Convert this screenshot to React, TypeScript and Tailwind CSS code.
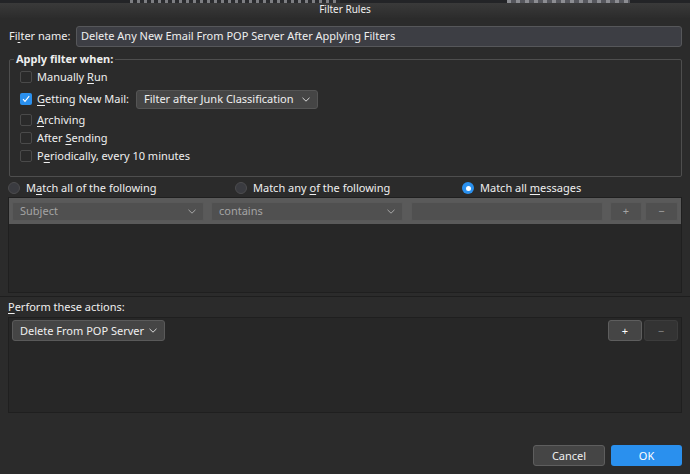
import React from "react";

const Chevron = ({ c = "#d8d8d8" }: { c?: string }) => (
  <svg width="8" height="5" viewBox="0 0 8 5" fill="none" className="shrink-0">
    <path d="M0.5 0.8L4 4.2L7.5 0.8" stroke={c} strokeWidth="1" />
  </svg>
);

const U = ({ children }: { children: React.ReactNode }) => (
  <span className="underline underline-offset-2 decoration-1">{children}</span>
);

const Check = ({ label, on }: { label: React.ReactNode; on?: boolean }) => (
  <div className="flex items-center gap-[5px] whitespace-nowrap">
    {on ? (
      <div className="w-[12px] h-[12px] rounded-[2px] bg-[#2a90ee] flex items-center justify-center">
        <svg width="10" height="10" viewBox="0 0 10 10" fill="none">
          <path d="M2 5.2l2 2.2L8.2 2.2" stroke="#fff" strokeWidth="1.1" />
        </svg>
      </div>
    ) : (
      <div className="w-[12px] h-[12px] rounded-[2px] bg-[#2a2a2a] border border-[#4a4a4a]" />
    )}
    <span>{label}</span>
  </div>
);

const Radio = ({ label, on, w }: { label: React.ReactNode; on?: boolean; w: string }) => (
  <div className={`flex items-center gap-[6px] whitespace-nowrap ${w}`}>
    {on ? (
      <div className="w-[12px] h-[12px] rounded-full bg-[#2a90ee] flex items-center justify-center">
        <div className="w-[5px] h-[5px] rounded-full bg-white" />
      </div>
    ) : (
      <div className="w-[12px] h-[12px] rounded-full bg-[#3a3b40] border border-[#4c4c4e]" />
    )}
    <span>{label}</span>
  </div>
);

export default function App() {
  return (
    <div
      className="w-[690px] h-[474px] overflow-hidden bg-[#2b2b2b] text-[#efefef] text-[11px] leading-[16px] flex flex-col whitespace-nowrap"
      style={{ fontFamily: '"Noto Sans", "Open Sans", sans-serif' }}
    >
      <div className="h-[3px] bg-[#232427] flex shrink-0">
        <div className="w-[130px]" />
        <div className="w-[210px] bg-[repeating-linear-gradient(90deg,#7d7e82_0_3px,#2a2b2e_3px_7px)]" />
        <div className="w-[167px]" />
        <div className="w-[123px] bg-[repeating-linear-gradient(90deg,#8c8d92_0_4px,#55565c_4px_9px)]" />
      </div>
      <div className="h-[15px] shrink-0 bg-gradient-to-b from-[#3a3a3a] to-[#2c2c2c] text-center text-[10px] leading-[13px] text-[#efefef]">
        Filter Rules
      </div>

      <div className="flex items-center h-[22px] mt-[7px] pl-[9px] pr-[8px] shrink-0">
        <span className="w-[67px] shrink-0">
          Fi<U>l</U>ter name:
        </span>
        <div className="flex-1 h-[21px] bg-[#3d3e44] border border-[#56575a] rounded-[3px] pl-[4px] flex items-center">
          Delete Any New Email From POP Server After Applying Filters
        </div>
      </div>

      <div className="relative mt-[12px] ml-[9px] mr-[8px] h-[118px] border border-[#4e4e4e] rounded-[2px] shrink-0 pl-[10px] pt-[10px]">
        <div className="absolute -top-[9px] left-[4px] bg-[#2b2b2b] px-[2px] font-bold">Apply filter when:</div>
        <div className="h-[14px] flex items-center">
          <Check label={<>Manually <U>R</U>un</>} />
        </div>
        <div className="h-[22px] mt-[4px] flex items-center">
          <Check on label={<><U>G</U>etting New Mail:</>} />
          <div className="ml-[7px] h-[19px] w-[182px] bg-[#454545] border border-[#555] rounded-[3px] flex items-center justify-between pl-[7px] pr-[7px]">
            <span>Filter after Junk Classification</span>
            <Chevron />
          </div>
        </div>
        <div className="h-[14px] mt-[3px] flex items-center">
          <Check label={<><U>A</U>rchiving</>} />
        </div>
        <div className="h-[14px] mt-[4px] flex items-center">
          <Check label={<>After <U>S</U>ending</>} />
        </div>
        <div className="h-[14px] mt-[4px] flex items-center">
          <Check label={<>P<U>e</U>riodically, every 10 minutes</>} />
        </div>
      </div>

      <div className="flex items-center h-[14px] mt-[4px] pl-[8px] shrink-0">
        <Radio w="w-[227px]" label={<>M<U>a</U>tch all of the following</>} />
        <Radio w="w-[227px]" label={<>Match any <U>o</U>f the following</>} />
        <Radio w="w-[200px]" on label={<>Match all <U>m</U>essages</>} />
      </div>

      <div className="ml-[8px] mr-[8px] mt-[2px] h-[96px] bg-[#272727] border border-[#1f1f1f] shrink-0 flex flex-col">
        <div className="h-[26px] bg-[#5a5a5a] flex items-center pl-[3px] pr-[3px] gap-[7px] text-[#a4a4a4]">
          <div className="w-[192px] h-[19px] bg-[#505050] border border-[#595959] rounded-[2px] flex items-center justify-between pl-[7px] pr-[7px]">
            <span>Subject</span>
            <Chevron c="#a8a8a8" />
          </div>
          <div className="w-[192px] h-[19px] bg-[#505050] border border-[#595959] rounded-[2px] flex items-center justify-between pl-[7px] pr-[7px]">
            <span>contains</span>
            <Chevron c="#a8a8a8" />
          </div>
          <div className="w-[192px] h-[19px] ml-px bg-[#505050] border border-[#595959] rounded-[2px]" />
          <div className="w-[32px] h-[19px] bg-[#505050] border border-[#595959] rounded-[2px] flex items-center justify-center">+</div>
          <div className="w-[33px] h-[19px] -ml-[4px] bg-[#505050] border border-[#595959] rounded-[2px] flex items-center justify-center">−</div>
        </div>
      </div>

      <div className="h-px mt-[3px] bg-[#1e1e1e] shrink-0" />

      <div className="pl-[8px] mt-[1px] h-[18px] flex items-center shrink-0">
        <span><U>P</U>erform these actions:</span>
      </div>

      <div className="ml-[8px] mr-[8px] mt-[1px] h-[96px] bg-[#272727] border border-[#1f1f1f] shrink-0 pt-[2px] pl-[3px] pr-[3px] flex items-start justify-between">
        <div className="h-[21px] w-[153px] bg-[#454545] border border-[#5a5a5a] rounded-[3px] flex items-center justify-between pl-[7px] pr-[7px]">
          <span>Delete From POP Server</span>
          <Chevron />
        </div>
        <div className="flex gap-[2px]">
          <div className="w-[34px] h-[21px] bg-[#454545] border border-[#5e5e5e] rounded-[3px] flex items-center justify-center text-white">+</div>
          <div className="w-[34px] h-[21px] bg-[#333333] border border-[#3c3c3c] rounded-[3px] flex items-center justify-center text-[#888]">−</div>
        </div>
      </div>

      <div className="flex justify-end gap-[6px] mt-[32px] pr-[8px] shrink-0">
        <div className="w-[72px] h-[21px] bg-[#454545] border border-[#5e5e5e] rounded-[3px] flex items-center justify-center">Cancel</div>
        <div className="w-[71px] h-[21px] bg-[#2a90ee] rounded-[3px] flex items-center justify-center text-white">OK</div>
      </div>
    </div>
  );
}
